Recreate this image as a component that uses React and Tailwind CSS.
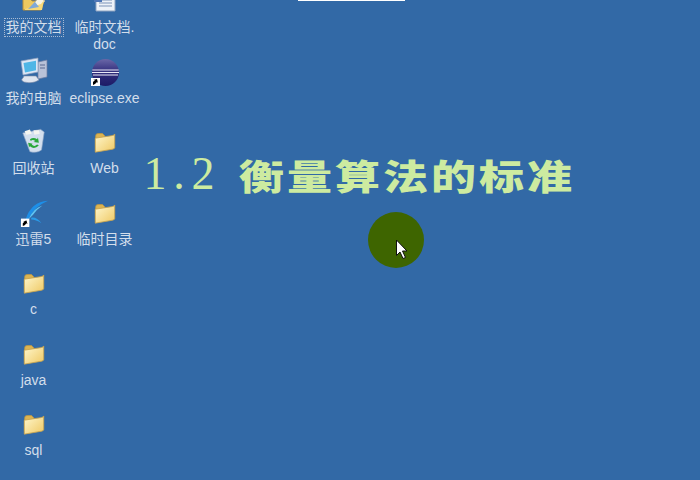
import React from "react";

const Folder = () => (
  <svg width="24" height="22" viewBox="0 0 28 26">
    <defs>
      <linearGradient id="fld" x1="0" y1="0" x2="1" y2="1">
        <stop offset="0" stopColor="#fff8cf" />
        <stop offset="1" stopColor="#efc862" />
      </linearGradient>
    </defs>
    <path d="M3 22V5.500Q3 3 6 3h5l3 3" fill="#dcb452" stroke="#b99545" strokeWidth="1" />
    <path d="M2.500 25V8.500L22 5.500Q25.500 5 25.500 3.500V19.500Q25.500 21 23 21.500Z" fill="url(#fld)" stroke="#c8a44e" strokeWidth="1" strokeLinejoin="round" />
  </svg>
);

const MyDocs = () => (
  <svg width="30" height="32" viewBox="0 0 30 32">
    <path d="M4 30V18h7l2 3h12l-3 9Z" fill="#eec95f" stroke="#b89036" />
    <path d="M12 27 20 17l6 4-7 7Z" fill="#f6f3e4" stroke="#b9b39a" />
    <path d="M6 29 22 24l3-4-2 10H6Z" fill="#f7d978" />
    <path d="M9 29 20 27l-4-5Z" fill="#7fa8d8" />
  </svg>
);

const Doc = () => (
  <svg width="30" height="32" viewBox="0 0 30 32">
    <path d="M6 16h19v15H6Z" fill="#eef2f8" stroke="#8fa4c0" />
    <path d="M9 20h13M9 23h13M9 26h13" stroke="#7d93b8" strokeWidth="1" />
    <path d="M4 16h8v6H4Z" fill="#4f77b7" />
  </svg>
);

const Computer = () => (
  <svg className="-mb-[2px]" width="32" height="30" viewBox="0 0 32 30">
    <path d="M20 7 29 5v17l-9 2Z" fill="#b9c2d8" stroke="#6d7ba0" strokeWidth=".7" />
    <path d="M22 10h5M22 13h5" stroke="#5a6890" />
    <path d="M3 6 20 3v14L5 20Z" fill="#dce6f5" stroke="#8fa0bd" strokeWidth=".7" />
    <path d="M5.500 8 18 5.800v9.500L7 17.500Z" fill="#4fb6e6" />
    <path d="M6 21h12l3 4q-6 4-15 2-4-2-1-4Z" fill="#dfe5ef" stroke="#7f8da8" strokeWidth=".6" />
  </svg>
);

const Eclipse = () => (
  <svg className="-mb-[4px]" width="30" height="28" viewBox="0 0 30 28">
    <defs>
      <linearGradient id="ecl" x1="0" y1="0" x2="0" y2="1">
        <stop offset="0" stopColor="#6a67a8" />
        <stop offset="0.45" stopColor="#34307e" />
        <stop offset="1" stopColor="#1c1a66" />
      </linearGradient>
    </defs>
    <circle cx="15.500" cy="13.500" r="13.500" fill="url(#ecl)" />
    <path d="M2.300 11h26.400M2 13.500h27M3 16h25" stroke="#e9e8f6" strokeWidth="1" />
    <path d="M1 19h9v8H1Z" fill="#fff" />
    <path d="M3 26v-3l2-2h-2l4-1 1 4-1-1-2 2Z" fill="#000" />
  </svg>
);

const Recycle = () => (
  <svg className="-mb-[1px]" width="25" height="26" viewBox="0 0 28 28">
    <path d="M2 5 22 1l4 3-3 20q-5 4-13 2Z" fill="#d3dfee" stroke="#8da5c5" strokeWidth=".7" />
    <path d="M4 3 10 1l2 5-6 1ZM14 2h6l1 4-6 1Z" fill="#f4f5f0" />
    <path d="M10 12q4-3 8 0l1-2 1 6-6-1 2-1q-3-2-5 0ZM8 16l5 1-1 1q3 3 6 0l2 1q-5 5-10 1l-1 1Z" fill="#28a83a" />
  </svg>
);

const Thunder = () => (
  <svg className="-mb-[3px]" width="32" height="28" viewBox="0 0 34 30">
    <path d="M32 2Q14 3 8 22q2 1 4-2Q18 8 32 2Z" fill="#1d8fe8" />
    <path d="M26 7Q16 10 11 22l5-5q4-6 10-10Z" fill="#5fc4f2" />
    <path d="M14 20q6-1 11 6-6-4-11-4Z" fill="#2a9be8" />
    <path d="M3 21h9v9H3Z" fill="#fff" />
    <path d="M5 29v-3l2-2h-2l4-1 1 4-1-1-2 2Z" fill="#000" />
  </svg>
);

const icons = [
  { icon: <MyDocs />, label: "我的文档", focus: true },
  { icon: <Doc />, label: "临时文档.\ndoc" },
  { icon: <Computer />, label: "我的电脑" },
  { icon: <Eclipse />, label: "eclipse.exe" },
  { icon: <Recycle />, label: "回收站" },
  { icon: <Folder />, label: "Web" },
  { icon: <Thunder />, label: "迅雷5" },
  { icon: <Folder />, label: "临时目录" },
  { icon: <Folder />, label: "c" },
  null,
  { icon: <Folder />, label: "java" },
  null,
  { icon: <Folder />, label: "sql" },
];

const DesktopIcon = ({ item }) => (
  <div className="flex flex-col items-center">
    <div className="h-[32px] flex items-end justify-center">{item.icon}</div>
    <span
      className={`mt-[7px] px-[1px] text-[14px] leading-[17px] text-center whitespace-pre text-[#d3deeb] ${
        item.focus ? "outline outline-dotted outline-[#a9bbd2]" : ""
      }`}
    >
      {item.label}
    </span>
  </div>
);

export default function App() {
  return (
    <div className="relative w-[700px] h-[480px] overflow-hidden bg-[#3269a6] font-['Liberation_Sans','Noto_Sans_CJK_SC',sans-serif] flex">
      <div className="absolute top-0 left-[298px] w-[107px] h-[1px] bg-white" />

      <div className="grid grid-cols-[71px_71px] auto-rows-[70.5px] w-[140px] ml-[-2px] mt-[-20px] shrink-0 h-fit">
        {icons.map((item, i) =>
          item ? <DesktopIcon key={i} item={item} /> : <div key={i} />
        )}
      </div>

      <div className="flex-1 flex flex-col">
        <h1 className="mt-[146px] ml-[5px] flex items-center h-[56px] text-[#cdeba0] whitespace-nowrap">
          <span className="flex font-['Liberation_Serif',serif] text-[46px] leading-none font-normal">
            <span className="w-[24px] text-center">1</span>
            <span className="w-[24px] text-center">.</span>
            <span className="w-[24px] text-center">2</span>
          </span>
          <span className="ml-[24px] font-['Noto_Sans_CJK_SC',sans-serif] text-[45px] tracking-[3px] leading-none font-black scale-y-[0.78]">
            衡量算法的标准
          </span>
        </h1>
      </div>

      {/* pointer highlight */}
      <div className="absolute left-[368px] top-[212px] w-[56px] h-[56px] rounded-full bg-[#3e6500]">
        <svg className="absolute left-[27px] top-[27px]" width="13" height="21" viewBox="0 0 13 21">
          <path d="M1.500 1v15.500l3.500-3.500 3 6.500 2.500-1-3-6.500h4.500Z" fill="#fff" stroke="#111" strokeWidth="1" />
        </svg>
      </div>
    </div>
  );
}
